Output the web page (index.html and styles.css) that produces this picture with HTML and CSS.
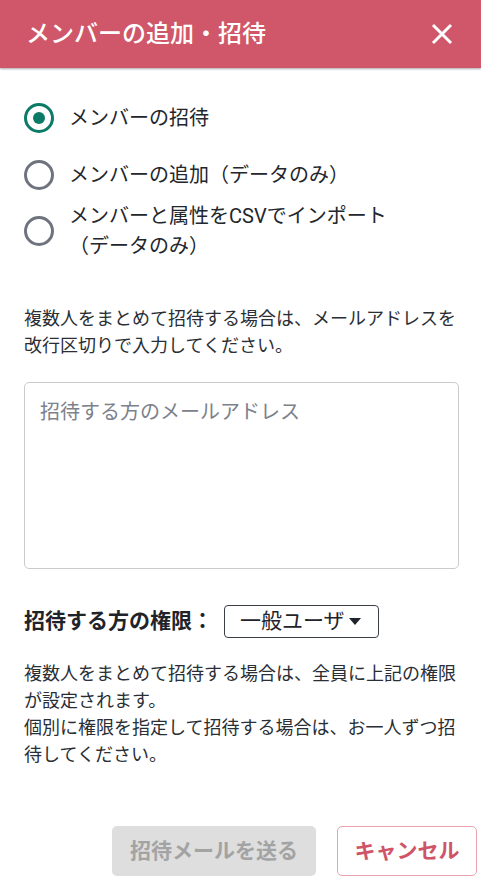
FILE: index.html
```html
<!DOCTYPE html>
<html lang="ja">
<head>
<meta charset="utf-8">
<title>メンバーの追加・招待</title>
<link rel="stylesheet" href="styles.css">
</head>
<body>
<div class="dialog">
  <header class="dialog-header">
    <h1 class="dialog-title">メンバーの追加・招待</h1>
    <button class="close-btn" aria-label="閉じる">
      <svg width="22" height="22" viewBox="0 0 22 22"><path d="M2 2 L20 20 M20 2 L2 20" stroke="#fff" stroke-width="3" fill="none"/></svg>
    </button>
  </header>
  <main class="dialog-body">
    <div class="options">
      <label class="option"><input class="radio" type="radio" name="mode" checked><span class="option-text">メンバーの招待</span></label>
      <label class="option"><input class="radio" type="radio" name="mode"><span class="option-text">メンバーの追加（データのみ）</span></label>
      <label class="option"><input class="radio" type="radio" name="mode"><span class="option-text">メンバーと属性をCSVでインポート<br>（データのみ）</span></label>
    </div>
    <p class="note note-first">複数人をまとめて招待する場合は、メールアドレスを改行区切りで入力してください。</p>
    <textarea class="emails" placeholder="招待する方のメールアドレス"></textarea>
    <div class="role-row">
      <span class="role-label">招待する方の権限：</span>
      <button class="role-select">一般ユーザ<svg class="caret" width="12" height="7" viewBox="0 0 12 7"><path d="M0 0 H12 L6 7 Z" fill="#1f232a"/></svg></button>
    </div>
    <p class="note note-second">複数人をまとめて招待する場合は、全員に上記の権限が設定されます。<br>個別に権限を指定して招待する場合は、お一人ずつ招待してください。</p>
  </main>
  <footer class="dialog-footer">
    <button class="btn btn-send" disabled>招待メールを送る</button>
    <button class="btn btn-cancel">キャンセル</button>
  </footer>
</div>
</body>
</html>
```

FILE: styles.css
```css
html, body {
  margin: 0;
  padding: 0;
  background: #ffffff;
}
body {
  font-family: Roboto, "Noto Sans CJK JP", sans-serif;
  color: #22262d;
  width: 481px;
  height: 881px;
  overflow: hidden;
}
.dialog {
  display: flex;
  flex-direction: column;
}
.dialog-header {
  height: 68px;
  background: #cf5769;
  box-shadow: 0 1px 2px rgba(0, 0, 0, 0.35);
  display: flex;
  align-items: center;
  justify-content: space-between;
  padding: 0 28px 0 26px;
  position: relative;
  z-index: 1;
}
.dialog-title {
  margin: 0;
  font-size: 24px;
  font-weight: 500;
  line-height: 1;
  color: #ffffff;
}
.close-btn {
  background: none;
  border: 0;
  padding: 0;
  width: 22px;
  height: 22px;
  display: flex;
  cursor: pointer;
}
.dialog-body {
  padding: 0 22px 0 24px;
}
.options {
  margin-top: 22px;
  display: flex;
  flex-direction: column;
}
.option {
  height: 56.5px;
  display: flex;
  align-items: center;
  gap: 15px;
  font-size: 20px;
  line-height: 30px;
  cursor: pointer;
}
.radio {
  appearance: none;
  -webkit-appearance: none;
  margin: 0;
  flex: none;
  width: 30px;
  height: 30px;
  border: 3px solid #6e737e;
  border-radius: 50%;
  display: grid;
  place-items: center;
  background: #fff;
}
.radio:checked {
  border-color: #0b7a66;
}
.radio:checked::after {
  content: "";
  width: 12px;
  height: 12px;
  border-radius: 50%;
  background: #0b7a66;
}
.option-text {
  color: #22262d;
}
.note {
  margin: 0;
  font-size: 18px;
  line-height: 27px;
  color: #2a2e35;
}
.note-first {
  margin-top: 45px;
}
.emails {
  display: block;
  box-sizing: border-box;
  margin-top: 23.5px;
  width: 435px;
  height: 187px;
  border: 1px solid #cacbcd;
  border-radius: 5px;
  padding: 14px 15px;
  font-family: inherit;
  font-size: 20px;
  line-height: 30px;
  color: #22262d;
  resize: none;
  outline: none;
}
.emails::placeholder {
  color: #7c818b;
}
.role-row {
  margin-top: 36px;
  display: flex;
  align-items: center;
  gap: 11px;
}
.role-label {
  font-size: 21px;
  font-weight: 700;
  line-height: 33px;
  color: #1f232a;
}
.role-select {
  box-sizing: border-box;
  height: 33px;
  width: 155px;
  border: 1px solid #3a3f47;
  border-radius: 4px;
  background: #fff;
  padding: 0 15px;
  display: flex;
  align-items: center;
  gap: 4px;
  font-family: inherit;
  font-size: 21px;
  line-height: 1;
  color: #1f232a;
}
.caret {
  flex: none;
}
.note-second {
  margin-top: 22px;
}
.dialog-footer {
  margin-top: 58px;
  display: flex;
  justify-content: flex-end;
  gap: 21px;
  padding-right: 4px;
}
.btn {
  box-sizing: border-box;
  height: 50px;
  border-radius: 5px;
  font-family: inherit;
  font-size: 21px;
  font-weight: 700;
  line-height: 1;
  padding: 0;
}
.btn-send {
  width: 204px;
  background: #dedede;
  border: 0;
  color: #a3a3a3;
}
.btn-cancel {
  width: 140px;
  background: #ffffff;
  border: 1px solid #eaa3ad;
  color: #cf5468;
}
```
